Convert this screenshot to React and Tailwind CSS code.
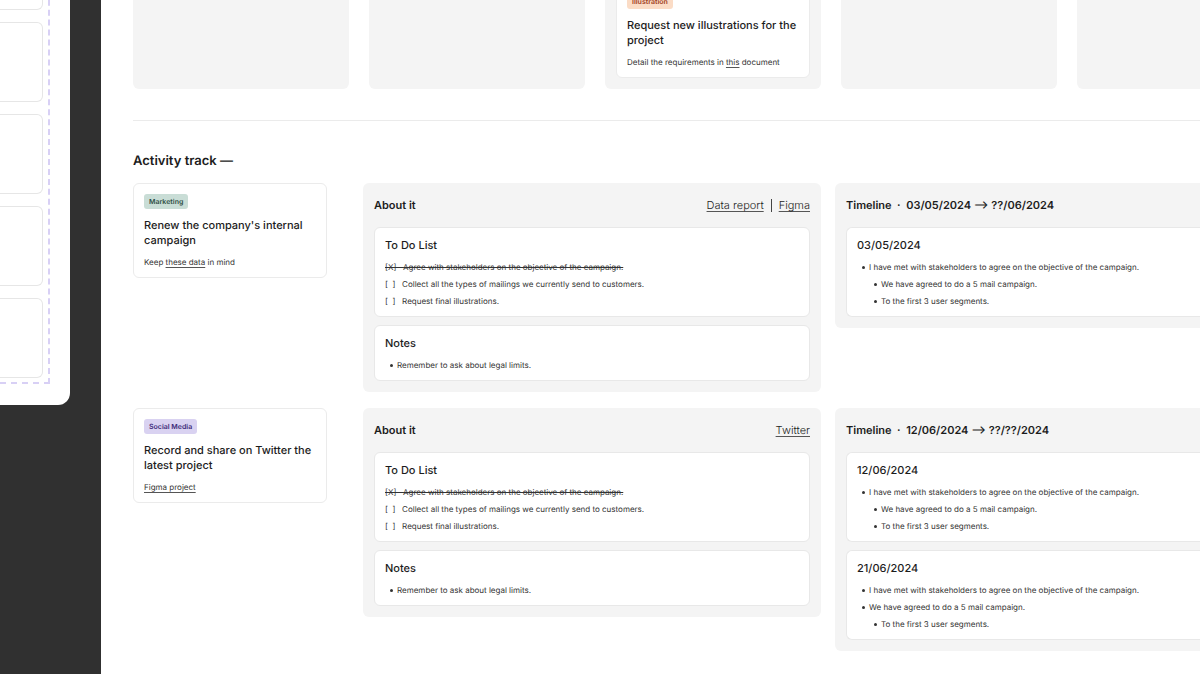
import { useState } from "react";

const tracks = [
  {
    id: "marketing",
    tag: "Marketing",
    tagClass: "bg-[#c9ddd6] text-[#2f4f45]",
    title: "Renew the company's internal campaign",
    detail: (
      <>
        Keep <TextLink>these data</TextLink> in mind
      </>
    ),
    links: ["Data report", "Figma"],
    period: "03/05/2024 ⟶ ??/06/2024",
    entries: [
      {
        date: "03/05/2024",
        notes: [
          {
            text: "I have met with stakeholders to agree on the objective of the campaign.",
            children: ["We have agreed to do a 5 mail campaign.", "To the first 3 user segments."],
          },
        ],
      },
    ],
  },
  {
    id: "social",
    tag: "Social Media",
    tagClass: "bg-[#d9d2f1] text-[#3d2a78]",
    title: "Record and share on Twitter the latest project",
    detail: <TextLink>Figma project</TextLink>,
    links: ["Twitter"],
    period: "12/06/2024 ⟶ ??/??/2024",
    entries: [
      {
        date: "12/06/2024",
        notes: [
          {
            text: "I have met with stakeholders to agree on the objective of the campaign.",
            children: ["We have agreed to do a 5 mail campaign.", "To the first 3 user segments."],
          },
        ],
      },
      {
        date: "21/06/2024",
        notes: [
          { text: "I have met with stakeholders to agree on the objective of the campaign." },
          {
            text: "We have agreed to do a 5 mail campaign.",
            children: ["To the first 3 user segments."],
          },
        ],
      },
    ],
  },
];

const todos = [
  { text: "Agree with stakeholders on the objective of the campaign.", done: true },
  { text: "Collect all the types of mailings we currently send to customers.", done: false },
  { text: "Request final illustrations.", done: false },
];

function TextLink({ children }) {
  return (
    <a href="#" className="underline decoration-[#555] decoration-1 underline-offset-2">
      {children}
    </a>
  );
}

function TaskCard({ tag, tagClass, title, children }) {
  return (
    <article className="rounded-md border border-[#ebebeb] bg-white px-[10px] pt-[10px] pb-[9px]">
      <span className={`block w-fit rounded-[3px] px-[5px] text-[7px] leading-[15px] font-semibold ${tagClass}`}>
        {tag}
      </span>
      <h3 className="mt-[9px] text-[11px] leading-[15px] font-medium">{title}</h3>
      <p className="mt-2 text-[8px] leading-3 text-[#333]">{children}</p>
    </article>
  );
}

function DocCard({ title, className, children }) {
  return (
    <section className={`border-[#e8e8e8] bg-white px-[10px] pt-[10px] pb-[6px] ${className}`}>
      <h4 className="mb-[6px] text-[11px] leading-[15px] font-medium">{title}</h4>
      {children}
    </section>
  );
}

function BulletItem({ text, children }) {
  return (
    <li>
      <div className="flex items-center gap-1 pl-1">
        <span className="flex w-1 justify-center">
          <span className="size-[3px] rounded-full bg-[#333]" />
        </span>
        <span>{text}</span>
      </div>
      {children}
    </li>
  );
}

function BulletList({ items }) {
  return (
    <ul className="text-[8px] leading-[17px] text-[#333]">
      {items.map((item) => (
        <BulletItem key={item.text} text={item.text}>
          {item.children && (
            <ul className="pl-3">
              {item.children.map((child) => (
                <BulletItem key={child} text={child} />
              ))}
            </ul>
          )}
        </BulletItem>
      ))}
    </ul>
  );
}

function TodoItem({ text, done }) {
  const [checked, setChecked] = useState(done);

  return (
    <li>
      <label className={`relative block w-fit cursor-pointer whitespace-pre ${checked ? "line-through" : ""}`}>
        <input
          type="checkbox"
          className="sr-only"
          checked={checked}
          onChange={(e) => setChecked(e.target.checked)}
        />
        {checked ? "[X]   " : "[  ]   "}
        {text}
      </label>
    </li>
  );
}

function AboutPanel({ links }) {
  return (
    <section className="rounded-md bg-[#f4f4f4] p-[11px]">
      <header className="mb-[11px] flex h-[22px] items-center justify-between">
        <h3 className="text-[11px] font-semibold">About it</h3>
        <nav className="flex items-center text-[11px] leading-4 font-light">
          {links.map((link, i) => (
            <span key={link} className="flex items-center">
              {i > 0 && <span className="mx-[7px] h-[13px] w-px bg-[#444]" />}
              <TextLink>{link}</TextLink>
            </span>
          ))}
        </nav>
      </header>

      <div className="flex flex-col gap-2">
        <DocCard title="To Do List" className="rounded-md border">
          <ul className="text-[8px] leading-[17px] text-[#333]">
            {todos.map((todo) => (
              <TodoItem key={todo.text} {...todo} />
            ))}
          </ul>
        </DocCard>
        <DocCard title="Notes" className="rounded-md border">
          <BulletList items={[{ text: "Remember to ask about legal limits." }]} />
        </DocCard>
      </div>
    </section>
  );
}

function TimelinePanel({ period, entries }) {
  return (
    <section className="rounded-l-md bg-[#f4f4f4] py-[11px] pl-[11px]">
      <header className="mb-[11px] flex h-[22px] items-center">
        <h3 className="text-[11px] font-semibold whitespace-pre">Timeline  ·  {period}</h3>
      </header>
      <div className="flex flex-col gap-2">
        {entries.map((entry) => (
          <DocCard key={entry.date} title={entry.date} className="rounded-l-md border-y border-l">
            <BulletList items={entry.notes} />
          </DocCard>
        ))}
      </div>
    </section>
  );
}

// bottom-right corner of the neighbouring frame
function SideFrame() {
  return (
    <aside className="flex h-[405px] w-[70px] shrink-0 flex-col justify-end overflow-hidden rounded-br-xl bg-white pr-[20px] pb-[21px]">
      <div className="flex shrink-0 flex-col gap-3 border-r-2 border-b-2 border-dashed border-[#d8d0f5] pr-[5px] pb-1">
        {[1, 2, 3, 4, 5].map((n) => (
          <div key={n} className="h-20 rounded-r-md border-y border-r border-[#e6e6e6]" />
        ))}
      </div>
    </aside>
  );
}

function Board() {
  return (
    <div className="grid h-[89px] grid-cols-[repeat(4,216px)_1fr] gap-5 overflow-hidden">
      <div className="rounded-b-md bg-[#f4f4f4]" />
      <div className="rounded-b-md bg-[#f4f4f4]" />
      <div className="flex h-[89px] flex-col justify-end rounded-b-md bg-[#f4f4f4] p-[11px]">
        <TaskCard
          tag="Illustration"
          tagClass="bg-[#fbdcc6] text-[#a03c1c]"
          title="Request new illustrations for the project"
        >
          Detail the requirements in <TextLink>this</TextLink> document
        </TaskCard>
      </div>
      <div className="rounded-b-md bg-[#f4f4f4]" />
      <div className="rounded-bl-md bg-[#f4f4f4]" />
    </div>
  );
}

export default function App() {
  return (
    <div className="flex min-h-screen items-start gap-[31px] overflow-hidden bg-[#303030] font-['Inter',sans-serif] text-[#1c1c1c] [text-rendering:geometricPrecision]">
      <SideFrame />

      <main className="min-h-screen min-w-0 flex-1 self-stretch bg-white pl-8">
        <Board />
        <hr className="mt-[31px] border-[#ebebeb]" />
        <h2 className="mt-[30px] text-[13px] leading-5 font-semibold">Activity track —</h2>

        <div className="mt-3 flex flex-col gap-4 pb-5">
          {tracks.map((track) => (
            <div key={track.id} className="grid grid-cols-[194px_1fr] items-start gap-9">
              <TaskCard tag={track.tag} tagClass={track.tagClass} title={track.title}>
                {track.detail}
              </TaskCard>
              <div className="grid grid-cols-[458px_1fr] items-start gap-[14px]">
                <AboutPanel links={track.links} />
                <TimelinePanel period={track.period} entries={track.entries} />
              </div>
            </div>
          ))}
        </div>
      </main>
    </div>
  );
}
